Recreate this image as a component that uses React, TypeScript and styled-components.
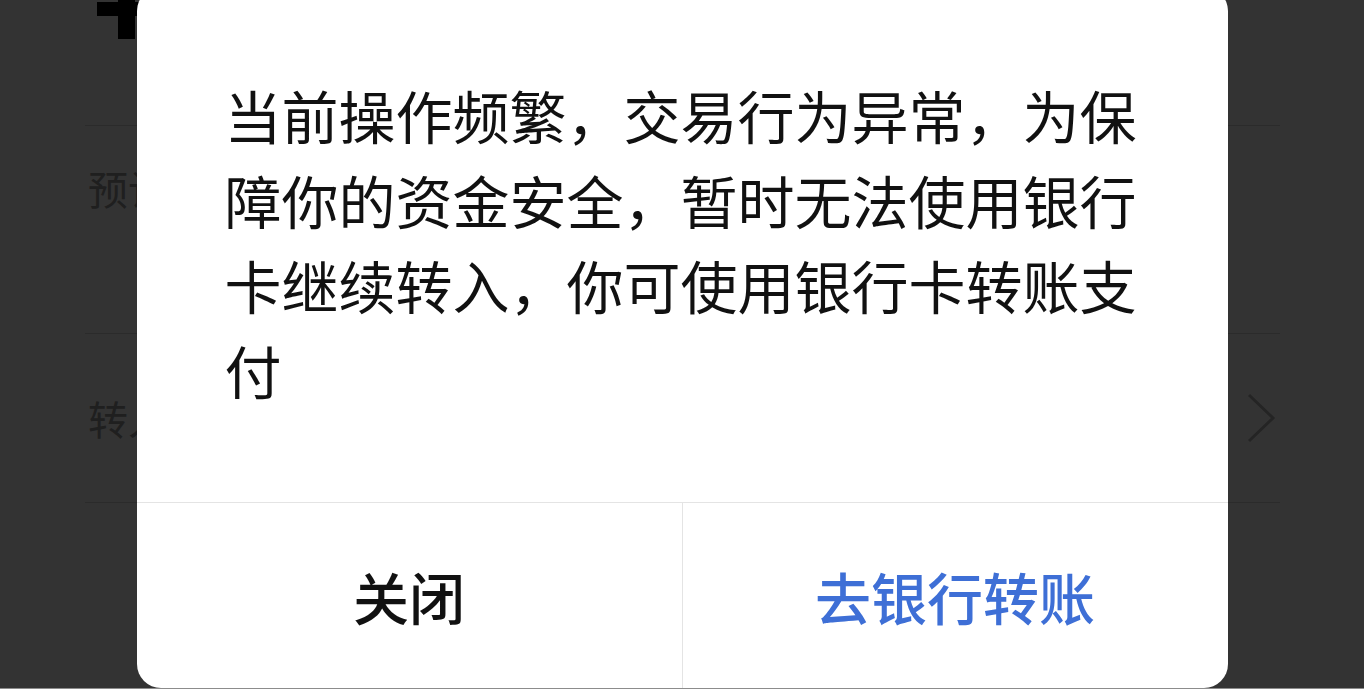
import React from "react";
import styled, { createGlobalStyle } from "styled-components";

const GlobalStyle = createGlobalStyle`
  html, body { margin: 0; padding: 0; }
  body {
    width: 1364px;
    height: 689px;
    overflow: hidden;
    font-family: "Noto Sans CJK SC", "Noto Sans", sans-serif;
    background: #ffffff;
  }
  * { box-sizing: border-box; }
`;

const Page = styled.div`
  position: relative;
  width: 1364px;
  height: 689px;
  overflow: hidden;
  background: #ffffff;
  padding: 0 84px 0 85px;
`;

const Header = styled.div`
  height: 126px;
  border-bottom: 1px solid #d6d6d6;
  display: flex;
  align-items: flex-start;
  padding-left: 12px;
`;

const Row = styled.div<{ $h: number; $align: string }>`
  height: ${(p) => p.$h}px;
  border-bottom: 1px solid #d6d6d6;
  display: flex;
  align-items: ${(p) => p.$align};
  justify-content: space-between;
  padding: ${(p) => (p.$align === "flex-start" ? "34px 4px 0 3px" : "0 4px 0 3px")};
`;

const Label = styled.span`
  font-size: 40px;
  line-height: 56px;
  color: #9a9a9a;
`;

const Overlay = styled.div`
  position: fixed;
  inset: 0;
  background: rgba(0, 0, 0, 0.8);
  display: flex;
  justify-content: center;
  align-items: flex-end;
  border-bottom: 1px solid #8c8c8c;
`;

const Dialog = styled.div`
  width: 1091px;
  height: 701px;
  background: #ffffff;
  border-radius: 24px;
  display: flex;
  flex-direction: column;
  overflow: hidden;
`;

const Message = styled.div`
  flex: 1;
  padding: 85px 88px 0 88px;
  font-size: 57px;
  line-height: 85px;
  color: #111111;
  border-bottom: 1px solid #e4e4e4;
`;

const Buttons = styled.div`
  height: 185px;
  display: flex;
`;

const DialogButton = styled.button<{ $primary?: boolean }>`
  flex: 1;
  border: none;
  background: transparent;
  font-family: "Noto Sans CJK SC", "Noto Sans", sans-serif;
  font-size: 56px;
  font-weight: 500;
  color: ${(p) => (p.$primary ? "#3e6fd6" : "#111111")};
  display: flex;
  align-items: center;
  justify-content: center;
  padding: 0;
  & + & {
    border-left: 1px solid #e4e4e4;
  }
`;

const PlusIcon = () => (
  <svg width="60" height="60" viewBox="0 0 60 60" style={{ marginTop: -19 }}>
    <rect x="21" y="0" width="17" height="58" fill="#000" />
    <rect x="0" y="21" width="58" height="14" fill="#000" />
  </svg>
);

const Chevron = () => (
  <svg width="30" height="52" viewBox="0 0 30 52">
    <polyline points="3,3 27,26 3,49" fill="none" stroke="#b3b3b3" strokeWidth="3" />
  </svg>
);

export default function App() {
  return (
    <>
      <GlobalStyle />
      <Page>
        <Header>
          <PlusIcon />
        </Header>
        <Row $h={208} $align="flex-start">
          <Label>预计到账</Label>
        </Row>
        <Row $h={169} $align="center">
          <Label>转入方式</Label>
          <Chevron />
        </Row>
      </Page>
      <Overlay>
        <Dialog>
          <Message>
            当前操作频繁，交易行为异常，为保障你的资金安全，暂时无法使用银行卡继续转入，你可使用银行卡转账支付
          </Message>
          <Buttons>
            <DialogButton>关闭</DialogButton>
            <DialogButton $primary>去银行转账</DialogButton>
          </Buttons>
        </Dialog>
      </Overlay>
    </>
  );
}
